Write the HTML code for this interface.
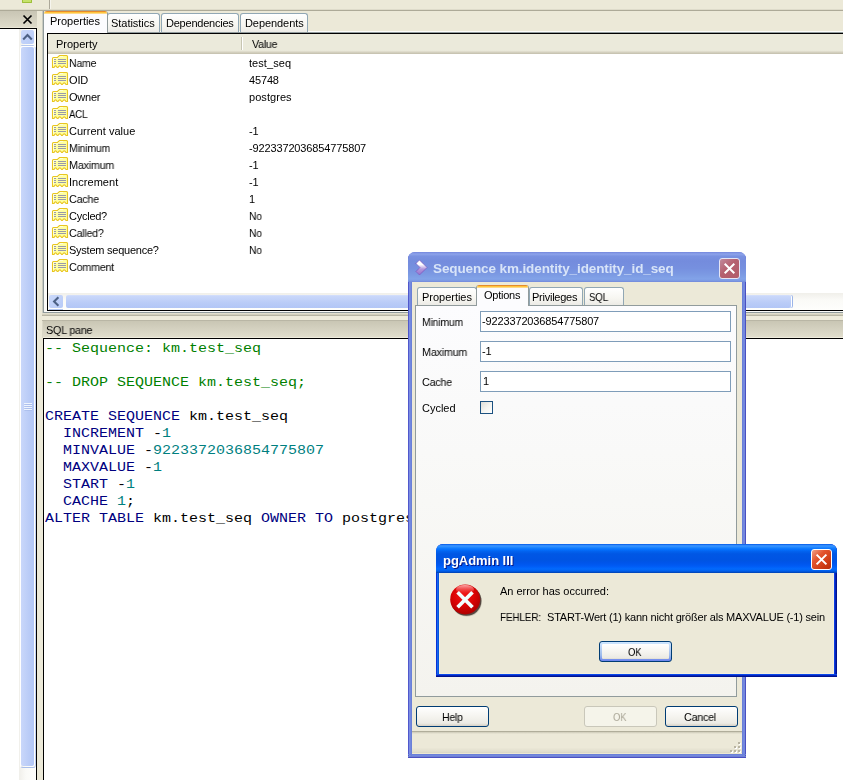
<!DOCTYPE html>
<html>
<head>
<meta charset="utf-8">
<title>pgAdmin III</title>
<style>
html,body{margin:0;padding:0;}
body{width:843px;height:780px;overflow:hidden;background:#ECE9D8;position:relative;font-family:"Liberation Sans",sans-serif;font-size:11px;color:#000;}
.a{position:absolute;}
.t{position:absolute;white-space:pre;line-height:13px;height:13px;will-change:transform;}
.ico{position:absolute;width:16px;height:13px;left:52px;overflow:visible;}
#list{left:47px;top:33px;width:796px;height:278px;background:#fff;border-left:1px solid #000;border-top:1px solid #000;border-bottom:1px solid #000;box-sizing:border-box;}
.tab{top:13px;height:19px;background:linear-gradient(#fff,#F7F6F1 60%,#ECEBE6);border:1px solid #91A7B4;border-bottom:none;border-radius:3px 3px 0 0;box-sizing:border-box;}
#sql{left:43px;top:338px;width:800px;height:442px;background:#fff;border-left:1px solid #000;border-top:1px solid #000;box-sizing:border-box;}
.code{position:absolute;left:44.5px;font-family:"Liberation Mono",monospace;font-size:12px;line-height:17px;height:17px;white-space:pre;color:#000;transform:scaleX(1.25);transform-origin:0 0;}
.kw{color:#00007F;}
.cm{color:#007F00;}
.nm{color:#007F7F;}
.inp{left:480px;width:251px;height:21px;box-sizing:border-box;border:1px solid #7F9DB9;background:#fff;}
.btn{position:absolute;box-sizing:border-box;border:1px solid #003C74;border-radius:3px;background:linear-gradient(#fff 0%,#F5F4EF 50%,#ECEBE5 85%,#D6D0C5 100%);}
</style>
</head>
<body>
<!-- top strip -->
<div class="a" style="left:22px;top:0;width:10px;height:3px;background:#C5E26B;border:1px solid #9FBF3A;border-top:none;box-sizing:border-box;border-radius:0 0 1px 1px;"></div>
<div class="a" style="left:49px;top:0;width:1px;height:10px;background:#ACA899;"></div>
<div class="a" style="left:50px;top:0;width:1px;height:10px;background:#F6F5EE;"></div>
<div class="a" style="left:0;top:9px;width:843px;height:1px;background:#DEDBCA;"></div>
<div class="a" style="left:0;top:10px;width:843px;height:1px;background:#ADAA98;"></div>
<!-- left pane -->
<div class="a" style="left:0;top:11px;width:37px;height:17px;background:linear-gradient(#C8C5B4 0%,#DEDBCA 93%,#EAE7D7 94%);"></div>
<svg class="a" style="left:22px;top:14px;" width="12" height="11" viewBox="0 0 12 11"><path d="M1.5 1.5 L9.5 9.5 M9.5 1.5 L1.5 9.5" stroke="#000" stroke-width="1.7" fill="none"/></svg>
<div class="a" style="left:0;top:28px;width:37px;height:1px;background:#000;"></div>
<div class="a" style="left:0;top:29px;width:36px;height:751px;background:#fff;"></div>
<div class="a" style="left:36px;top:28px;width:1px;height:752px;background:#000;"></div>
<div class="a" style="left:19px;top:29px;width:17px;height:751px;background:linear-gradient(90deg,#F0EFEA,#FAFAF7 40%,#FEFEFC);"></div>
<div class="a" style="left:21px;top:30px;width:13px;height:14px;border-radius:2px;background:linear-gradient(135deg,#CBD9FA,#B7CAF7);"></div>
<div class="a" style="left:21px;top:45px;width:13px;height:1px;background:#B5C7EE;border-radius:0 0 2px 2px;"></div>
<svg class="a" style="left:22px;top:33px;" width="11" height="8" viewBox="0 0 11 8"><path d="M1.2 6.4 L5.5 2.1 L9.8 6.4" stroke="#4D6185" stroke-width="2.1" fill="none"/></svg>
<div class="a" style="left:20px;top:46px;width:16px;height:722px;box-sizing:border-box;border-radius:3px;border:1px solid #fff;border-right-color:#C3D3F6;border-bottom-color:#A9BEEA;"></div>
<div class="a" style="left:21px;top:47px;width:13px;height:719px;border-radius:2px;background:linear-gradient(90deg,#C9D7FA,#BACCF7 60%,#B2C6F6);"></div>
<svg class="a" style="left:24px;top:403px;" width="8" height="9" viewBox="0 0 8 9"><path d="M0 0.5H8M0 2.5H8M0 4.5H8M0 6.5H8" stroke="#EEF4FE" stroke-width="1"/><path d="M0.5 1.5H8M0.5 3.5H8M0.5 5.5H8M0.5 7.5H8" stroke="#A4B8E8" stroke-width="1" opacity=".6"/></svg>
<!-- splitter -->
<div class="a" style="left:42px;top:11px;width:1px;height:327px;background:#C9CAC0;"></div>
<div class="a" style="left:43px;top:11px;width:1px;height:302px;background:#919B9C;"></div>
<div class="a" style="left:44px;top:33px;width:3px;height:279px;background:#FBFBF8;"></div>
<!-- notebook -->
<div class="a" style="left:44px;top:31px;width:799px;height:1px;background:#FDFDFB;"></div>
<div class="a" style="left:44px;top:32px;width:799px;height:1px;background:#919B9C;"></div>
<div class="a tab" style="left:107px;width:53px;"></div>
<div class="a tab" style="left:161px;width:78px;"></div>
<div class="a tab" style="left:240px;width:68px;"></div>
<div class="t" style="left:111px;top:17px;letter-spacing:-0.04px;">Statistics</div>
<div class="t" style="left:166px;top:17px;letter-spacing:-0.23px;">Dependencies</div>
<div class="t" style="left:245px;top:17px;letter-spacing:-0.07px;">Dependents</div>
<div class="a" style="left:44px;top:11px;width:64px;height:22px;background:#FCFCFE;border-right:1px solid #919B9C;box-sizing:border-box;border-radius:3px 3px 0 0;overflow:hidden;"><div style="height:1px;background:#E68B2C;"></div><div style="height:1px;background:#FFC73C;"></div><div style="height:1px;background:#FFD98A;"></div></div>
<div class="t" style="left:50px;top:15px;letter-spacing:-0.02px;">Properties</div>
<div class="a" id="list"></div>
<div class="a" style="left:48px;top:34px;width:795px;height:20px;background:linear-gradient(#EBEADB 0%,#EBEADB 82%,#DEDBCB 88%,#CFCBB9 94%,#C3BFAD 100%);"></div>
<div class="a" style="left:241px;top:37px;width:1px;height:13px;background:#C7C5B2;"></div>
<div class="a" style="left:242px;top:37px;width:1px;height:13px;background:#fff;"></div>
<div class="t" style="left:56px;top:38px;">Property</div>
<div class="t" style="left:252px;top:38px;letter-spacing:-0.25px;transform:scaleX(0.969);transform-origin:0 0;">Value</div>
<svg class="ico" style="top:55px" viewBox="0 0 16 13"><path d="M0.5 3.5 Q0.5 2.5 1.5 2.5 L5.5 2.5 L7.5 0.5 L14.5 0.5 Q15.5 0.5 15.5 1.5 L15.5 12.5 L14 12.5 Q12.2 9.3 10.4 12.5 L9.6 12.5 Q7.8 9.3 6 12.5 L5.2 12.5 Q3.6 9.3 2 12.5 L0.5 12.5 Z" fill="#FFFFA0" stroke="#E8C520" stroke-width="1.1"/><path d="M1.5 10.5 L1.5 3.5 L5.9 3.5 L7.9 1.5 L11 1.5" stroke="#FFFFE8" stroke-width="1" fill="none" opacity=".8"/><path d="M2 4.5H4M2 6.5H4M2 8.5H4M6 4.5H14M6 6.5H14M6 8.5H14" stroke="#9A9AA8" stroke-width="1"/></svg>
<div class="t" style="left:69px;top:57px;letter-spacing:-0.25px;transform:scaleX(0.961);transform-origin:0 0;">Name</div>
<div class="t" style="left:249px;top:57px;letter-spacing:0.06px;">test_seq</div>
<svg class="ico" style="top:72px" viewBox="0 0 16 13"><path d="M0.5 3.5 Q0.5 2.5 1.5 2.5 L5.5 2.5 L7.5 0.5 L14.5 0.5 Q15.5 0.5 15.5 1.5 L15.5 12.5 L14 12.5 Q12.2 9.3 10.4 12.5 L9.6 12.5 Q7.8 9.3 6 12.5 L5.2 12.5 Q3.6 9.3 2 12.5 L0.5 12.5 Z" fill="#FFFFA0" stroke="#E8C520" stroke-width="1.1"/><path d="M1.5 10.5 L1.5 3.5 L5.9 3.5 L7.9 1.5 L11 1.5" stroke="#FFFFE8" stroke-width="1" fill="none" opacity=".8"/><path d="M2 4.5H4M2 6.5H4M2 8.5H4M6 4.5H14M6 6.5H14M6 8.5H14" stroke="#9A9AA8" stroke-width="1"/></svg>
<div class="t" style="left:69px;top:74px;letter-spacing:-0.15px;">OID</div>
<div class="t" style="left:249px;top:74px;letter-spacing:-0.15px;">45748</div>
<svg class="ico" style="top:89px" viewBox="0 0 16 13"><path d="M0.5 3.5 Q0.5 2.5 1.5 2.5 L5.5 2.5 L7.5 0.5 L14.5 0.5 Q15.5 0.5 15.5 1.5 L15.5 12.5 L14 12.5 Q12.2 9.3 10.4 12.5 L9.6 12.5 Q7.8 9.3 6 12.5 L5.2 12.5 Q3.6 9.3 2 12.5 L0.5 12.5 Z" fill="#FFFFA0" stroke="#E8C520" stroke-width="1.1"/><path d="M1.5 10.5 L1.5 3.5 L5.9 3.5 L7.9 1.5 L11 1.5" stroke="#FFFFE8" stroke-width="1" fill="none" opacity=".8"/><path d="M2 4.5H4M2 6.5H4M2 8.5H4M6 4.5H14M6 6.5H14M6 8.5H14" stroke="#9A9AA8" stroke-width="1"/></svg>
<div class="t" style="left:69px;top:91px;letter-spacing:-0.22px;">Owner</div>
<div class="t" style="left:249px;top:91px;letter-spacing:0.06px;">postgres</div>
<svg class="ico" style="top:106px" viewBox="0 0 16 13"><path d="M0.5 3.5 Q0.5 2.5 1.5 2.5 L5.5 2.5 L7.5 0.5 L14.5 0.5 Q15.5 0.5 15.5 1.5 L15.5 12.5 L14 12.5 Q12.2 9.3 10.4 12.5 L9.6 12.5 Q7.8 9.3 6 12.5 L5.2 12.5 Q3.6 9.3 2 12.5 L0.5 12.5 Z" fill="#FFFFA0" stroke="#E8C520" stroke-width="1.1"/><path d="M1.5 10.5 L1.5 3.5 L5.9 3.5 L7.9 1.5 L11 1.5" stroke="#FFFFE8" stroke-width="1" fill="none" opacity=".8"/><path d="M2 4.5H4M2 6.5H4M2 8.5H4M6 4.5H14M6 6.5H14M6 8.5H14" stroke="#9A9AA8" stroke-width="1"/></svg>
<div class="t" style="left:69px;top:108px;letter-spacing:-0.25px;transform:scaleX(0.888);transform-origin:0 0;">ACL</div>
<svg class="ico" style="top:123px" viewBox="0 0 16 13"><path d="M0.5 3.5 Q0.5 2.5 1.5 2.5 L5.5 2.5 L7.5 0.5 L14.5 0.5 Q15.5 0.5 15.5 1.5 L15.5 12.5 L14 12.5 Q12.2 9.3 10.4 12.5 L9.6 12.5 Q7.8 9.3 6 12.5 L5.2 12.5 Q3.6 9.3 2 12.5 L0.5 12.5 Z" fill="#FFFFA0" stroke="#E8C520" stroke-width="1.1"/><path d="M1.5 10.5 L1.5 3.5 L5.9 3.5 L7.9 1.5 L11 1.5" stroke="#FFFFE8" stroke-width="1" fill="none" opacity=".8"/><path d="M2 4.5H4M2 6.5H4M2 8.5H4M6 4.5H14M6 6.5H14M6 8.5H14" stroke="#9A9AA8" stroke-width="1"/></svg>
<div class="t" style="left:69px;top:125px;letter-spacing:0.02px;">Current value</div>
<div class="t" style="left:249px;top:125px;letter-spacing:-0.25px;">-1</div>
<svg class="ico" style="top:140px" viewBox="0 0 16 13"><path d="M0.5 3.5 Q0.5 2.5 1.5 2.5 L5.5 2.5 L7.5 0.5 L14.5 0.5 Q15.5 0.5 15.5 1.5 L15.5 12.5 L14 12.5 Q12.2 9.3 10.4 12.5 L9.6 12.5 Q7.8 9.3 6 12.5 L5.2 12.5 Q3.6 9.3 2 12.5 L0.5 12.5 Z" fill="#FFFFA0" stroke="#E8C520" stroke-width="1.1"/><path d="M1.5 10.5 L1.5 3.5 L5.9 3.5 L7.9 1.5 L11 1.5" stroke="#FFFFE8" stroke-width="1" fill="none" opacity=".8"/><path d="M2 4.5H4M2 6.5H4M2 8.5H4M6 4.5H14M6 6.5H14M6 8.5H14" stroke="#9A9AA8" stroke-width="1"/></svg>
<div class="t" style="left:69px;top:142px;letter-spacing:-0.25px;transform:scaleX(0.957);transform-origin:0 0;">Minimum</div>
<div class="t" style="left:249px;top:142px;letter-spacing:-0.14px;">-9223372036854775807</div>
<svg class="ico" style="top:157px" viewBox="0 0 16 13"><path d="M0.5 3.5 Q0.5 2.5 1.5 2.5 L5.5 2.5 L7.5 0.5 L14.5 0.5 Q15.5 0.5 15.5 1.5 L15.5 12.5 L14 12.5 Q12.2 9.3 10.4 12.5 L9.6 12.5 Q7.8 9.3 6 12.5 L5.2 12.5 Q3.6 9.3 2 12.5 L0.5 12.5 Z" fill="#FFFFA0" stroke="#E8C520" stroke-width="1.1"/><path d="M1.5 10.5 L1.5 3.5 L5.9 3.5 L7.9 1.5 L11 1.5" stroke="#FFFFE8" stroke-width="1" fill="none" opacity=".8"/><path d="M2 4.5H4M2 6.5H4M2 8.5H4M6 4.5H14M6 6.5H14M6 8.5H14" stroke="#9A9AA8" stroke-width="1"/></svg>
<div class="t" style="left:69px;top:159px;letter-spacing:-0.25px;transform:scaleX(0.982);transform-origin:0 0;">Maximum</div>
<div class="t" style="left:249px;top:159px;letter-spacing:-0.25px;">-1</div>
<svg class="ico" style="top:174px" viewBox="0 0 16 13"><path d="M0.5 3.5 Q0.5 2.5 1.5 2.5 L5.5 2.5 L7.5 0.5 L14.5 0.5 Q15.5 0.5 15.5 1.5 L15.5 12.5 L14 12.5 Q12.2 9.3 10.4 12.5 L9.6 12.5 Q7.8 9.3 6 12.5 L5.2 12.5 Q3.6 9.3 2 12.5 L0.5 12.5 Z" fill="#FFFFA0" stroke="#E8C520" stroke-width="1.1"/><path d="M1.5 10.5 L1.5 3.5 L5.9 3.5 L7.9 1.5 L11 1.5" stroke="#FFFFE8" stroke-width="1" fill="none" opacity=".8"/><path d="M2 4.5H4M2 6.5H4M2 8.5H4M6 4.5H14M6 6.5H14M6 8.5H14" stroke="#9A9AA8" stroke-width="1"/></svg>
<div class="t" style="left:69px;top:176px;letter-spacing:0.04px;">Increment</div>
<div class="t" style="left:249px;top:176px;letter-spacing:-0.25px;">-1</div>
<svg class="ico" style="top:191px" viewBox="0 0 16 13"><path d="M0.5 3.5 Q0.5 2.5 1.5 2.5 L5.5 2.5 L7.5 0.5 L14.5 0.5 Q15.5 0.5 15.5 1.5 L15.5 12.5 L14 12.5 Q12.2 9.3 10.4 12.5 L9.6 12.5 Q7.8 9.3 6 12.5 L5.2 12.5 Q3.6 9.3 2 12.5 L0.5 12.5 Z" fill="#FFFFA0" stroke="#E8C520" stroke-width="1.1"/><path d="M1.5 10.5 L1.5 3.5 L5.9 3.5 L7.9 1.5 L11 1.5" stroke="#FFFFE8" stroke-width="1" fill="none" opacity=".8"/><path d="M2 4.5H4M2 6.5H4M2 8.5H4M6 4.5H14M6 6.5H14M6 8.5H14" stroke="#9A9AA8" stroke-width="1"/></svg>
<div class="t" style="left:69px;top:193px;letter-spacing:-0.25px;transform:scaleX(0.98);transform-origin:0 0;">Cache</div>
<div class="t" style="left:249px;top:193px;">1</div>
<svg class="ico" style="top:208px" viewBox="0 0 16 13"><path d="M0.5 3.5 Q0.5 2.5 1.5 2.5 L5.5 2.5 L7.5 0.5 L14.5 0.5 Q15.5 0.5 15.5 1.5 L15.5 12.5 L14 12.5 Q12.2 9.3 10.4 12.5 L9.6 12.5 Q7.8 9.3 6 12.5 L5.2 12.5 Q3.6 9.3 2 12.5 L0.5 12.5 Z" fill="#FFFFA0" stroke="#E8C520" stroke-width="1.1"/><path d="M1.5 10.5 L1.5 3.5 L5.9 3.5 L7.9 1.5 L11 1.5" stroke="#FFFFE8" stroke-width="1" fill="none" opacity=".8"/><path d="M2 4.5H4M2 6.5H4M2 8.5H4M6 4.5H14M6 6.5H14M6 8.5H14" stroke="#9A9AA8" stroke-width="1"/></svg>
<div class="t" style="left:69px;top:210px;letter-spacing:-0.25px;">Cycled?</div>
<div class="t" style="left:249px;top:210px;letter-spacing:-0.25px;transform:scaleX(0.941);transform-origin:0 0;">No</div>
<svg class="ico" style="top:225px" viewBox="0 0 16 13"><path d="M0.5 3.5 Q0.5 2.5 1.5 2.5 L5.5 2.5 L7.5 0.5 L14.5 0.5 Q15.5 0.5 15.5 1.5 L15.5 12.5 L14 12.5 Q12.2 9.3 10.4 12.5 L9.6 12.5 Q7.8 9.3 6 12.5 L5.2 12.5 Q3.6 9.3 2 12.5 L0.5 12.5 Z" fill="#FFFFA0" stroke="#E8C520" stroke-width="1.1"/><path d="M1.5 10.5 L1.5 3.5 L5.9 3.5 L7.9 1.5 L11 1.5" stroke="#FFFFE8" stroke-width="1" fill="none" opacity=".8"/><path d="M2 4.5H4M2 6.5H4M2 8.5H4M6 4.5H14M6 6.5H14M6 8.5H14" stroke="#9A9AA8" stroke-width="1"/></svg>
<div class="t" style="left:69px;top:227px;letter-spacing:-0.25px;transform:scaleX(0.974);transform-origin:0 0;">Called?</div>
<div class="t" style="left:249px;top:227px;letter-spacing:-0.25px;transform:scaleX(0.941);transform-origin:0 0;">No</div>
<svg class="ico" style="top:242px" viewBox="0 0 16 13"><path d="M0.5 3.5 Q0.5 2.5 1.5 2.5 L5.5 2.5 L7.5 0.5 L14.5 0.5 Q15.5 0.5 15.5 1.5 L15.5 12.5 L14 12.5 Q12.2 9.3 10.4 12.5 L9.6 12.5 Q7.8 9.3 6 12.5 L5.2 12.5 Q3.6 9.3 2 12.5 L0.5 12.5 Z" fill="#FFFFA0" stroke="#E8C520" stroke-width="1.1"/><path d="M1.5 10.5 L1.5 3.5 L5.9 3.5 L7.9 1.5 L11 1.5" stroke="#FFFFE8" stroke-width="1" fill="none" opacity=".8"/><path d="M2 4.5H4M2 6.5H4M2 8.5H4M6 4.5H14M6 6.5H14M6 8.5H14" stroke="#9A9AA8" stroke-width="1"/></svg>
<div class="t" style="left:69px;top:244px;letter-spacing:-0.24px;">System sequence?</div>
<div class="t" style="left:249px;top:244px;letter-spacing:-0.25px;transform:scaleX(0.941);transform-origin:0 0;">No</div>
<svg class="ico" style="top:259px" viewBox="0 0 16 13"><path d="M0.5 3.5 Q0.5 2.5 1.5 2.5 L5.5 2.5 L7.5 0.5 L14.5 0.5 Q15.5 0.5 15.5 1.5 L15.5 12.5 L14 12.5 Q12.2 9.3 10.4 12.5 L9.6 12.5 Q7.8 9.3 6 12.5 L5.2 12.5 Q3.6 9.3 2 12.5 L0.5 12.5 Z" fill="#FFFFA0" stroke="#E8C520" stroke-width="1.1"/><path d="M1.5 10.5 L1.5 3.5 L5.9 3.5 L7.9 1.5 L11 1.5" stroke="#FFFFE8" stroke-width="1" fill="none" opacity=".8"/><path d="M2 4.5H4M2 6.5H4M2 8.5H4M6 4.5H14M6 6.5H14M6 8.5H14" stroke="#9A9AA8" stroke-width="1"/></svg>
<div class="t" style="left:69px;top:261px;letter-spacing:-0.25px;transform:scaleX(0.98);transform-origin:0 0;">Comment</div>
<!-- h scrollbar -->
<div class="a" style="left:48px;top:293px;width:795px;height:17px;background:linear-gradient(#F0EFEA,#FAFAF7 40%,#FEFEFC);"></div>
<div class="a" style="left:49px;top:295px;width:14px;height:13px;border-radius:2px;background:linear-gradient(135deg,#CBD9FA,#B7CAF7);"></div>
<div class="a" style="left:49px;top:309px;width:14px;height:1px;background:#B5C7EE;"></div>
<svg class="a" style="left:52px;top:296px;" width="8" height="11" viewBox="0 0 8 11"><path d="M6.4 1.2 L2.1 5.5 L6.4 9.8" stroke="#4D6185" stroke-width="2.1" fill="none"/></svg>
<div class="a" style="left:66px;top:295px;width:725px;height:13px;border-radius:2px;background:linear-gradient(#D6E1FB 0%,#C9D7FA 10%,#BACCF7 60%,#B2C6F6);box-shadow:1px 0 0 #fff,2px 0 0 #9CB5E8;"></div>
<div class="a" style="left:44px;top:311px;width:799px;height:1px;background:#FBFBF8;"></div>
<div class="a" style="left:44px;top:312px;width:799px;height:1px;background:#919B9C;"></div>
<div class="a" style="left:42px;top:313px;width:801px;height:1px;background:#E2DFCD;"></div>
<div class="a" style="left:42px;top:314px;width:801px;height:1px;background:#D2CFBD;"></div>
<div class="a" style="left:42px;top:315px;width:801px;height:1px;background:#B9B6A4;"></div>
<div class="a" style="left:42px;top:316px;width:801px;height:4px;background:#EEEBDA;"></div>
<div class="a" style="left:42px;top:320px;width:801px;height:18px;background:linear-gradient(#B9B6A5 0%,#B9B6A5 5.5%,#C9C6B4 5.6%,#E0DDCC 94%,#EFECDD 94.5%);"></div>
<div class="a" style="left:42px;top:321px;width:1px;height:17px;background:#DAD7C7;"></div>
<div class="t" style="left:46px;top:324px;letter-spacing:-0.25px;transform:scaleX(0.982);transform-origin:0 0;">SQL pane</div>
<div class="a" id="sql"></div>
<div class="code" style="top:340.6px"><span class="cm">-- Sequence: km.test_seq</span></div>
<div class="code" style="top:374.6px"><span class="cm">-- DROP SEQUENCE km.test_seq;</span></div>
<div class="code" style="top:408.6px"><span class="kw">CREATE SEQUENCE</span> km.test_seq</div>
<div class="code" style="top:425.6px">  <span class="kw">INCREMENT</span> -<span class="nm">1</span></div>
<div class="code" style="top:442.6px">  <span class="kw">MINVALUE</span> -<span class="nm">9223372036854775807</span></div>
<div class="code" style="top:459.6px">  <span class="kw">MAXVALUE</span> -<span class="nm">1</span></div>
<div class="code" style="top:476.6px">  <span class="kw">START</span> -<span class="nm">1</span></div>
<div class="code" style="top:493.6px">  <span class="kw">CACHE</span> <span class="nm">1</span>;</div>
<div class="code" style="top:510.6px"><span class="kw">ALTER TABLE</span> km.test_seq <span class="kw">OWNER TO</span> postgres;</div>
<!-- Sequence dialog -->
<div class="a" style="left:408px;top:252px;width:338px;height:506px;border-radius:7px 7px 0 0;background:#7388DE;overflow:hidden;">
  <div class="a" style="left:0;top:0;width:1px;height:506px;background:#5058CC;"></div>
  <div class="a" style="left:1px;top:0;width:1px;height:506px;background:#7A8CE2;"></div>
  <div class="a" style="left:3px;top:0;width:1px;height:506px;background:#6A80D8;"></div>
  <div class="a" style="left:334px;top:0;width:1px;height:506px;background:#6A80D8;"></div>
  <div class="a" style="left:337px;top:0;width:1px;height:506px;background:#4A50C0;"></div>
  <div class="a" style="left:0;top:502px;width:338px;height:1px;background:#6A80D8;"></div>
  <div class="a" style="left:0;top:504px;width:338px;height:1px;background:#6F80D4;"></div>
  <div class="a" style="left:0;top:505px;width:338px;height:1px;background:#4A50C0;"></div>
  <div class="a" style="left:0;top:0;width:338px;height:30px;background:linear-gradient(#7487DD 0%,#8DA3EA 7%,#7A92E1 14%,#748CDD 30%,#7690DF 55%,#7C9AE3 75%,#82A3E8 90%,#7B97E2 97%,#6F84D8 100%);"></div>
  <div class="a" style="left:4px;top:30px;width:330px;height:472px;background:#ECE9D8;"></div>
</div>
<svg class="a" style="left:415px;top:259px;" width="14" height="17" viewBox="0 0 14 17"><defs><linearGradient id="pg1" x1="0" y1="0" x2="0" y2="1"><stop offset="0" stop-color="#fff"/><stop offset=".3" stop-color="#fff"/><stop offset=".6" stop-color="#B297DC"/><stop offset="1" stop-color="#9470CB"/></linearGradient></defs><path d="M1 4.5 L4.5 1 L12 8.5 L4.5 16 L1 12.5 L5 8.5 Z" fill="url(#pg1)" stroke="#7C50BE" stroke-width="1" stroke-dasharray="1 0.6"/></svg>
<div class="t" style="left:433px;top:261px;letter-spacing:-0.11px;font-size:13.5px;font-weight:bold;line-height:16px;height:16px;color:#D8E4F8;">Sequence km.identity_identity_id_seq</div>
<div class="a" style="left:719px;top:258px;width:21px;height:21px;box-sizing:border-box;border:1px solid #E6E6F5;border-radius:3px;background:linear-gradient(135deg,#C18A9C,#B5606F 45%,#B25C6B);"></div>
<svg class="a" style="left:723px;top:262px;" width="13" height="13" viewBox="0 0 13 13"><path d="M1.7 1.7 L11.3 11.3 M11.3 1.7 L1.7 11.3" stroke="#fff" stroke-width="2" fill="none"/></svg>
<div class="a" style="left:415px;top:305px;width:322px;height:392px;box-sizing:border-box;border:1px solid #919B9C;background:linear-gradient(#FCFCFE,#F8F8F6 50%,#F4F3EE);"></div>
<div class="a tab" style="left:417px;top:287px;width:60px;height:18px;"></div>
<div class="a tab" style="left:529px;top:287px;width:54px;height:18px;"></div>
<div class="a tab" style="left:584px;top:287px;width:40px;height:18px;"></div>
<div class="t" style="left:422px;top:291px;letter-spacing:-0.02px;">Properties</div>
<div class="t" style="left:532px;top:291px;letter-spacing:-0.25px;">Privileges</div>
<div class="t" style="left:589px;top:291px;letter-spacing:-0.25px;transform:scaleX(0.888);transform-origin:0 0;">SQL</div>
<div class="a" style="left:476px;top:285px;width:53px;height:21px;background:#FCFCFE;border-left:1px solid #919B9C;border-right:1px solid #919B9C;box-sizing:border-box;border-radius:3px 3px 0 0;overflow:hidden;"><div style="height:1px;background:#E68B2C;"></div><div style="height:1px;background:#FFC73C;"></div><div style="height:1px;background:#FFD98A;"></div></div>
<div class="t" style="left:484px;top:289px;letter-spacing:-0.25px;">Options</div>
<div class="t" style="left:422px;top:316px;letter-spacing:-0.25px;transform:scaleX(0.957);transform-origin:0 0;">Minimum</div>
<div class="t" style="left:422px;top:346px;letter-spacing:-0.25px;transform:scaleX(0.982);transform-origin:0 0;">Maximum</div>
<div class="t" style="left:422px;top:376px;letter-spacing:-0.25px;transform:scaleX(0.98);transform-origin:0 0;">Cache</div>
<div class="t" style="left:422px;top:402px;letter-spacing:-0.02px;">Cycled</div>
<div class="a inp" style="top:311px;"></div>
<div class="a inp" style="top:341px;"></div>
<div class="a inp" style="top:371px;"></div>
<div class="t" style="left:482px;top:315px;letter-spacing:-0.14px;">-9223372036854775807</div>
<div class="t" style="left:482px;top:345px;letter-spacing:-0.25px;">-1</div>
<div class="t" style="left:483px;top:375px;">1</div>
<div class="a" style="left:480px;top:401px;width:13px;height:13px;box-sizing:border-box;border:1px solid #1C5180;background:linear-gradient(135deg,#DCDCD7,#F3F3EF 50%,#fff);"></div>
<div class="btn" style="left:416px;top:706px;width:73px;height:21px;"></div>
<div class="btn" style="left:584px;top:706px;width:73px;height:21px;border-color:#C9C7BA;background:#F5F4EA;"></div>
<div class="btn" style="left:665px;top:706px;width:73px;height:21px;"></div>
<div class="t" style="left:441.5px;top:710.6px;letter-spacing:-0.25px;transform:scaleX(0.96);transform-origin:0 0;">Help</div>
<div class="t" style="left:613px;top:710.6px;letter-spacing:-0.25px;transform:scaleX(0.87);transform-origin:0 0;color:#ACA899;">OK</div>
<div class="t" style="left:684px;top:710.6px;letter-spacing:-0.25px;transform:scaleX(0.977);transform-origin:0 0;">Cancel</div>
<div class="a" style="left:412px;top:731px;width:330px;height:1px;background:#B0AD9A;"></div>
<div class="a" style="left:412px;top:732px;width:330px;height:22px;background:linear-gradient(#CBC8B6 0%,#DFDCCB 5%,#ECE9D8 10%,#ECE9D8 70%,#E0DDCC 90%,#D9D6C5 95.4%,#ECE8D2 95.5%);"></div>
<svg class="a" style="left:730px;top:742px;" width="12" height="12" viewBox="0 0 12 12"><g fill="#fff"><rect x="9" y="1" width="2" height="2"/><rect x="5" y="5" width="2" height="2"/><rect x="9" y="5" width="2" height="2"/><rect x="1" y="9" width="2" height="2"/><rect x="5" y="9" width="2" height="2"/><rect x="9" y="9" width="2" height="2"/></g><g fill="#B8B4A2"><rect x="8" y="0" width="2" height="2"/><rect x="4" y="4" width="2" height="2"/><rect x="8" y="4" width="2" height="2"/><rect x="0" y="8" width="2" height="2"/><rect x="4" y="8" width="2" height="2"/><rect x="8" y="8" width="2" height="2"/></g></svg>
<!-- Error dialog -->
<div class="a" style="left:436px;top:544px;width:401px;height:133px;border-radius:7px 7px 0 0;background:#0831D9;overflow:hidden;">
  <div class="a" style="left:1px;top:0;width:1px;height:133px;background:#166AEE;"></div>
  <div class="a" style="left:2px;top:0;width:1px;height:133px;background:#0855DD;"></div>
  <div class="a" style="left:398px;top:0;width:1px;height:133px;background:#0A3CE0;"></div>
  <div class="a" style="left:399px;top:0;width:1px;height:133px;background:#0322BC;"></div>
  <div class="a" style="left:400px;top:0;width:1px;height:133px;background:#00138C;"></div>
  <div class="a" style="left:0;top:130px;width:401px;height:1px;background:#0A48E8;"></div>
  <div class="a" style="left:0;top:131px;width:401px;height:1px;background:#0322BC;"></div>
  <div class="a" style="left:0;top:132px;width:401px;height:1px;background:#00138C;"></div>
  <div class="a" style="left:0;top:0;width:401px;height:29px;background:linear-gradient(#0058E6 0%,#3A93FF 6%,#288EFF 10%,#127DFF 14%,#036FFC 20%,#0262EE 26%,#0057E5 34%,#0054E3 56%,#0055EB 66%,#005BF5 76%,#026AFE 86%,#0062EF 92%,#0052D6 96%,#0040AB 100%);"></div>
  <div class="a" style="left:3px;top:29px;width:395px;height:101px;background:#ECE9D8;box-shadow:inset 1px 0 0 #F4EFDC, inset -1px -1px 0 #F4EFDC;"></div>
</div>
<div class="t" style="left:443px;top:553px;letter-spacing:-0.04px;font-size:13px;font-weight:bold;line-height:16px;height:16px;color:#fff;text-shadow:1px 1px 0 #0A1883;">pgAdmin III</div>
<div class="a" style="left:811px;top:549px;width:21px;height:21px;box-sizing:border-box;border:1px solid #fff;border-radius:3px;background:linear-gradient(135deg,#F0A088,#E4552E 35%,#CC3A12 75%,#B52E0C);"></div>
<svg class="a" style="left:815px;top:553px;" width="13" height="13" viewBox="0 0 13 13"><path d="M1.6 1.6 L11.4 11.4 M11.4 1.6 L1.6 11.4" stroke="#fff" stroke-width="2" fill="none"/></svg>
<svg class="a" style="left:449px;top:583px;" width="36" height="36" viewBox="0 0 36 36"><defs><radialGradient id="rg1" cx=".45" cy=".35" r=".7"><stop offset="0" stop-color="#F01818"/><stop offset=".5" stop-color="#DC0404"/><stop offset="1" stop-color="#A80000"/></radialGradient><linearGradient id="rg2" x1="0" y1="0" x2="0" y2="1"><stop offset="0" stop-color="#FFB0B0" stop-opacity=".95"/><stop offset="1" stop-color="#FF6060" stop-opacity="0"/></linearGradient></defs><circle cx="17.4" cy="17.8" r="15" fill="#1A0000" opacity=".85"/><circle cx="17.9" cy="18.6" r="15" fill="#8C8A7C" opacity=".35"/><circle cx="16.2" cy="16.4" r="15" fill="url(#rg1)"/><ellipse cx="16" cy="6.5" rx="9" ry="4.5" fill="url(#rg2)"/><path d="M8.6 9.2 L23.5 24.2 M23.5 9.2 L8.6 24.2" stroke="#F2FFFF" stroke-width="3.7" fill="none"/></svg>
<div class="t" style="left:500px;top:585px;letter-spacing:-0.02px;">An error has occurred:</div>
<div class="t" style="left:500px;top:611px;letter-spacing:-0.25px;transform:scaleX(0.915);transform-origin:0 0;">FEHLER:</div>
<div class="t" style="left:546.7px;top:611px;letter-spacing:-0.2px;">START-Wert (1) kann nicht größer als MAXVALUE (-1) sein</div>
<div class="btn" style="left:599px;top:641px;width:73px;height:21px;background:linear-gradient(#CEE7FF 0%,#BCD4F6 30%,#9DBBEB 70%,#6982EE 100%);overflow:hidden;"><div style="position:absolute;left:2px;top:2px;right:2px;bottom:2px;border-radius:1px;background:linear-gradient(#fff 0%,#F5F4EF 55%,#ECEBE5 90%,#E0DDD2 100%);"></div></div>
<div class="t" style="left:628px;top:646px;letter-spacing:-0.25px;transform:scaleX(0.87);transform-origin:0 0;">OK</div>
</body>
</html>
